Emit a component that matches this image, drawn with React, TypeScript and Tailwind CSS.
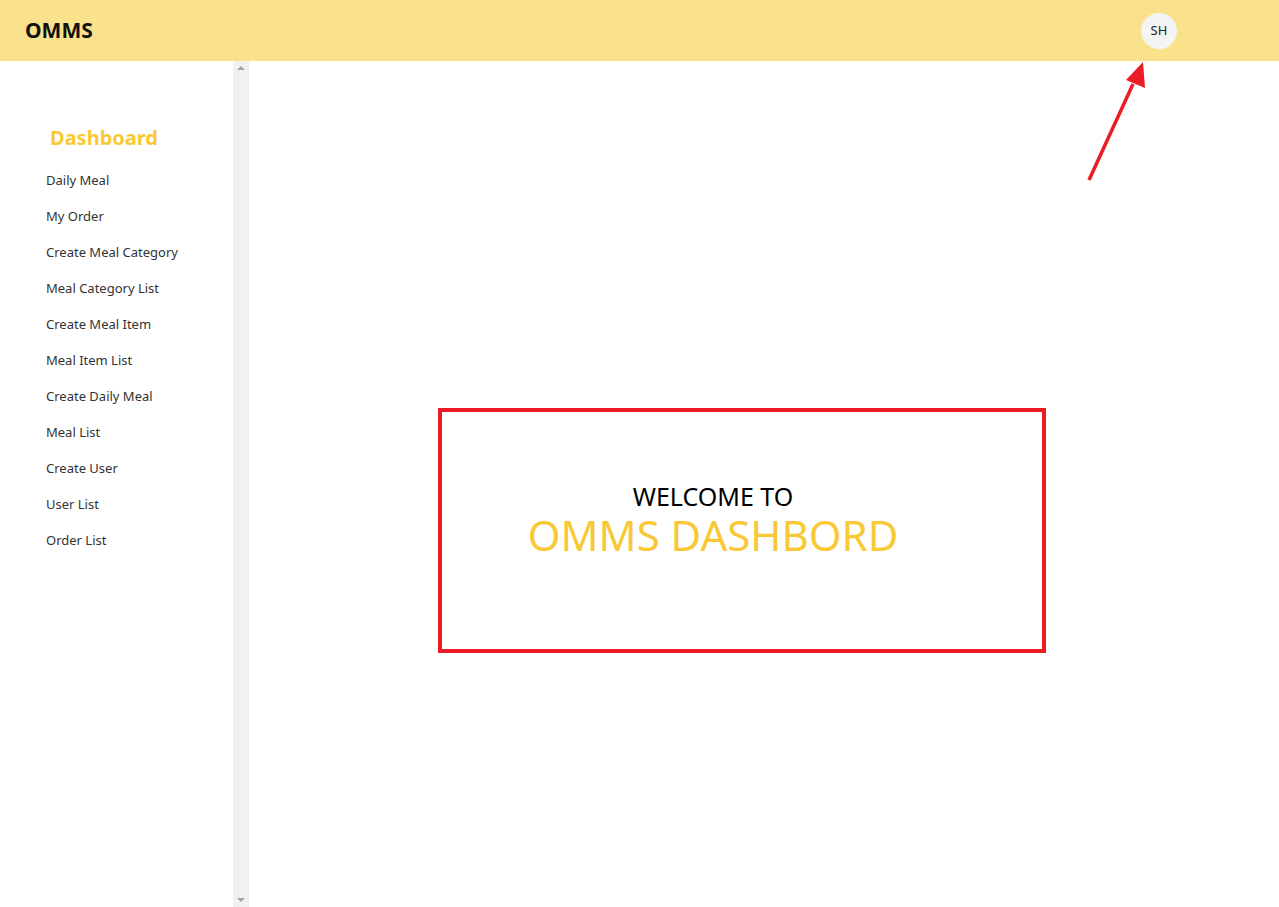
import React from "react";

const items = [
  "Daily Meal",
  "My Order",
  "Create Meal Category",
  "Meal Category List",
  "Create Meal Item",
  "Meal Item List",
  "Create Daily Meal",
  "Meal List",
  "Create User",
  "User List",
  "Order List",
];

export default function App() {
  return (
    <div
      className="relative w-[1279px] h-[907px] overflow-hidden bg-white flex flex-col"
      style={{ fontFamily: '"Noto Sans", "Open Sans", sans-serif' }}
    >
      <header className="h-[61px] shrink-0 bg-[#fae28c] flex items-center justify-between pl-[25px] pr-[102px]">
        <div className="text-[21px] font-bold text-[#111]">OMMS</div>
        <div className="w-[36px] h-[36px] rounded-full bg-[#f4f4f4] flex items-center justify-center text-[13px] text-[#222]">
          SH
        </div>
      </header>
      <div className="flex flex-1 min-h-0">
        <aside className="w-[233px] shrink-0 pt-[62px]">
          <div className="pl-[50px] text-[20px] font-bold text-[#f8c935] leading-[30px] mb-[10px]">
            Dashboard
          </div>
          <ul className="pl-[46px]">
            {items.map((it) => (
              <li key={it} className="h-[36px] flex items-center text-[13px] text-[#333]">
                {it}
              </li>
            ))}
          </ul>
        </aside>
        <div className="w-[16px] shrink-0 bg-[#f1f1f1] flex flex-col justify-between items-center py-[5px]">
          <div className="w-0 h-0 border-l-[4px] border-r-[4px] border-b-[4px] border-l-transparent border-r-transparent border-b-[#a3a3a3]" />
          <div className="w-0 h-0 border-l-[4px] border-r-[4px] border-t-[4px] border-l-transparent border-r-transparent border-t-[#a3a3a3]" />
        </div>
        <main className="flex-1 pl-[189px] pt-[347px]">
          <div className="w-[608px] h-[245px] border-[4px] border-[#ec1c24] flex items-center">
            <div className="w-[542px] text-center pb-[22px]">
              <div className="text-[25px] leading-[30px] text-black">WELCOME TO</div>
              <div className="text-[42px] leading-[48px] text-[#f8c935]">OMMS DASHBORD</div>
            </div>
          </div>
        </main>
      </div>
      <svg className="absolute left-0 top-0 pointer-events-none" width="1279" height="907">
        <line x1="1089" y1="180" x2="1133" y2="84" stroke="#ec1c24" strokeWidth="3.5" />
        <polygon points="1143,62 1145,88 1126,80" fill="#ec1c24" />
      </svg>
    </div>
  );
}
